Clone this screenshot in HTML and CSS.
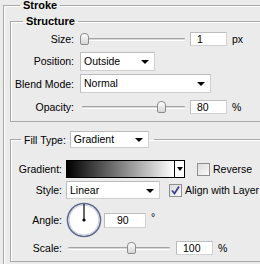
FILE: index.html
```html
<!DOCTYPE html>
<html lang="en">
<head>
  <meta charset="UTF-8">
  <title>Stroke</title>
  <link rel="stylesheet" href="styles.css">
</head>
<body>
  <fieldset class="group outer">
    <legend class="title title-outer">Stroke</legend>

    <!-- Structure -->
    <fieldset class="group structure">
      <legend class="title title-inner">Structure</legend>
      <div class="rows">
        <div class="row">
          <span class="lbl">Size:</span>
          <div class="slider"><span class="thumb" style="--v:0"></span></div>
          <span class="num">1</span><span class="unit">px</span>
        </div>
        <div class="row">
          <span class="lbl">Position:</span>
          <div class="select sel-pos">Outside<span class="arrow"></span></div>
        </div>
        <div class="row">
          <span class="lbl">Blend Mode:</span>
          <div class="select sel-blend">Normal<span class="arrow"></span></div>
        </div>
        <div class="row">
          <span class="lbl">Opacity:</span>
          <div class="slider"><span class="thumb" style="--v:0.8"></span></div>
          <span class="num">80</span><span class="unit">%</span>
        </div>
      </div>
    </fieldset>

    <!-- Fill type -->
    <fieldset class="group fill">
      <legend class="fill-legend">
        <span>Fill Type:</span>
        <div class="select sel-fill">Gradient<span class="arrow"></span></div>
      </legend>
      <div class="row row-grad">
        <span class="lbl lbl-fill">Gradient:</span>
        <div class="gradient"><span class="ramp"></span><span class="grad-btn"><span class="arrow"></span></span></div>
        <span class="check"></span><span class="check-text">Reverse</span>
      </div>
      <div class="row row-style">
        <span class="lbl lbl-fill">Style:</span>
        <div class="select sel-style">Linear<span class="arrow"></span></div>
        <span class="check check-on">
          <svg width="11" height="11" viewBox="0 0 11 11"><path d="M2 5.5 L4.5 8.5 L9 1.5" fill="none" stroke="#3b3f8f" stroke-width="1.8"/></svg>
        </span><span class="check-text">Align with Layer</span>
      </div>
      <div class="row row-angle">
        <span class="lbl lbl-fill">Angle:</span>
        <svg class="dial" width="36" height="36" viewBox="0 0 36 36">
          <circle cx="18" cy="18" r="16.5" fill="#fff" stroke="#5d6b8c" stroke-width="1.6"/>
          <circle cx="18" cy="18" r="15" fill="none" stroke="#c9cedb" stroke-width="1"/>
          <line x1="18" y1="18" x2="18" y2="2" stroke="#000" stroke-width="1.2"/>
          <circle cx="18" cy="18" r="1.6" fill="#000"/>
        </svg>
        <span class="num num-angle">90</span><span class="deg">°</span>
      </div>
      <div class="row row-scale">
        <span class="lbl lbl-fill">Scale:</span>
        <div class="slider slider-scale"><span class="thumb" style="--v:0.64"></span></div>
        <span class="num">100</span><span class="unit">%</span>
      </div>
    </fieldset>
  </fieldset>
</body>
</html>
```

FILE: styles.css
```css
html, body {
  margin: 0;
  overflow: hidden;
}
body {
  background: #ebebeb;
  font-family: "Liberation Sans", Arial, sans-serif;
  font-size: 10.5px;
  color: #000;
  width: 260px;
  height: 264px;
}
.group {
  margin: 0;
  padding: 0;
  border: 1px solid #a9a9a9;
  border-right: none;
  box-shadow: inset 1px 1px 0 #fff;
  min-width: 0;
}
.outer {
  box-sizing: border-box;
  margin-left: 3px;
  width: 257px;
  height: 264px;
  border-bottom: none;
  padding: 5px 0 0 6px;
}
.title {
  font-weight: bold;
  font-size: 11px;
  padding: 0 3px;
}
.title-outer {
  line-height: 10px;
  margin-left: 10px;
}
.title-inner {
  line-height: 12px;
  margin-left: 12px;
}
.structure {
  width: 250px;
}
.rows {
  display: grid;
  grid-template-rows: 22px 22px 23px 23px;
  padding: 1px 0 3px;
}
.row {
  display: flex;
  align-items: center;
}
.lbl {
  width: 63px;
  margin-right: 6px;
  text-align: right;
}
.lbl-fill {
  width: 51px;
  margin-right: 4px;
}

/* slider */
.slider {
  position: relative;
  width: 105px;
  height: 14px;
  margin-right: 5px;
}
.slider::before {
  content: "";
  position: absolute;
  left: 2px;
  right: 0;
  top: 6px;
  height: 1px;
  border-top: 1px solid #a4a4a4;
  border-bottom: 1px solid #fff;
  background: #d8d8d8;
  border-radius: 1px;
}
.thumb {
  position: absolute;
  top: 1px;
  left: calc((100% - 9px) * var(--v));
  width: 7px;
  height: 10px;
  border: 1px solid #8c8c8c;
  border-radius: 4px 4px 2px 2px;
  background: linear-gradient(#fdfdfd, #d6d6d6);
}
.slider-scale {
  width: 104px;
  margin-right: 6px;
}

/* number boxes */
.num {
  box-sizing: border-box;
  width: 37px;
  height: 14px;
  line-height: 12px;
  padding-left: 6px;
  background: #fff;
  border: 1px solid #d2d2d2;
  border-top-color: #bdbdbd;
  border-left-color: #bdbdbd;
}
.unit {
  margin-left: 5px;
}
.num-angle {
  width: 42px;
  height: 15px;
  line-height: 13px;
  padding-left: 12px;
  margin-left: 2px;
}
.deg {
  margin-left: 5px;
  align-self: flex-start;
  margin-top: 9px;
}

/* dropdowns */
.select {
  position: relative;
  box-sizing: border-box;
  height: 19px;
  line-height: 17px;
  padding-left: 3px;
  background: #fff;
  border: 1px solid #cfcfcf;
  border-top-color: #bcbcbc;
  border-left-color: #bcbcbc;
}
.arrow {
  position: absolute;
  right: 5px;
  top: 7px;
  width: 0;
  height: 0;
  border-left: 4px solid transparent;
  border-right: 4px solid transparent;
  border-top: 4px solid #000;
}
.sel-pos { width: 75px; }
.sel-blend { width: 131px; }
.sel-fill {
  width: 79px;
  height: 17px;
  line-height: 15px;
}
.sel-fill .arrow { top: 6px; }
.sel-style {
  width: 94px;
  height: 18px;
  line-height: 16px;
}

/* fill type */
.fill {
  width: 250px;
  margin-top: 9px;
  padding: 12px 0 5px;
}
.fill-legend {
  display: flex;
  align-items: center;
  margin-left: 10px;
  padding: 0 5px 0 3px;
  gap: 4px;
}
.row-grad { height: 18px; }
.row-style {
  height: 18px;
  margin-top: 3px;
}
.row-angle {
  height: 36px;
  margin-top: 3px;
}
.row-scale {
  height: 16px;
  margin-top: 2px;
}
.gradient {
  display: flex;
  box-sizing: border-box;
  width: 119px;
  height: 18px;
  border: 1px solid #000;
  margin-right: 12px;
}
.ramp {
  flex: 1;
  background: linear-gradient(to right, #000, #fff);
}
.grad-btn {
  position: relative;
  width: 9px;
  background: #fff;
  border-left: 1px solid #000;
}
.grad-btn .arrow {
  right: 1px;
  top: 6px;
  border-left-width: 3px;
  border-right-width: 3px;
}
.check {
  box-sizing: border-box;
  width: 13px;
  height: 13px;
  border: 1px solid #8e8e8e;
  background: linear-gradient(135deg, #dcdcdc, #fafafa);
  display: flex;
  align-items: center;
  justify-content: center;
}
.row-style .check { margin-left: 9px; }
.check-text {
  margin-left: 3px;
  white-space: nowrap;
}
.dial {
  display: block;
}
```
